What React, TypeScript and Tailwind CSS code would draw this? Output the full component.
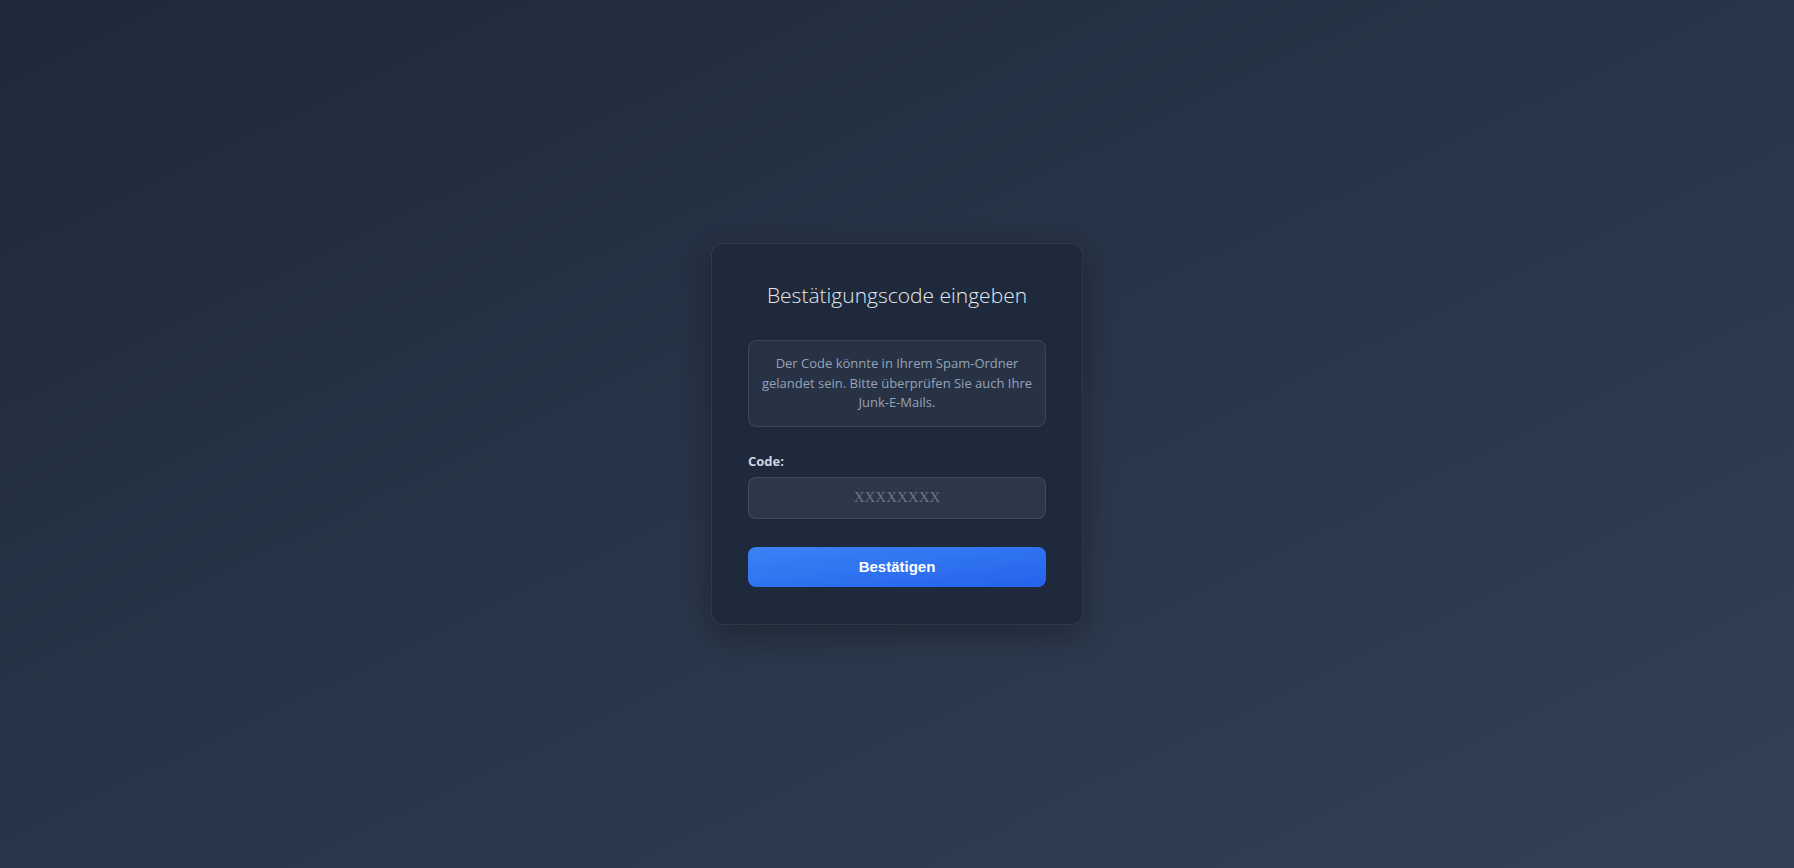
import React, { useState } from 'react';

export default function App() {
    const [code, setCode] = useState('');

    return (
        <div className="min-h-screen w-full flex items-center justify-center bg-gradient-to-br from-[#1e293b] to-[#334155] font-['Open_Sans',sans-serif]">
            {/* Verification card */}
            <div className="w-[372px] rounded-xl border border-[#334155]/70 bg-[#1e293b] px-[36px] pt-[36px] pb-[37px] shadow-[0_10px_30px_rgba(0,0,0,0.3)]">
                <h2 className="text-center text-[21px] leading-[30px] font-light text-[#e2e8f0] font-['Open_Sans',sans-serif]">
                    Bestätigungscode eingeben
                </h2>

                <div className="mt-[30px] rounded-lg border border-[#3b4658] bg-[#273244] px-[12px] py-[13px] text-center text-[13px] leading-[19.5px] text-[#94a3b8]">
                    Der Code könnte in Ihrem Spam-Ordner gelandet sein. Bitte überprüfen Sie auch Ihre Junk-E-Mails.
                </div>

                <form onSubmit={(e) => e.preventDefault()}>
                    <label htmlFor="code" className="mt-[25px] block text-[13px] leading-[18px] font-bold text-[#cbd5e1]">
                        Code:
                    </label>
                    <input
                        id="code"
                        value={code}
                        onChange={(e) => setCode(e.target.value)}
                        placeholder="XXXXXXXX"
                        className="mt-[7px] block h-[42px] w-full rounded-lg border border-[#475569]/70 bg-[#2d3748] text-center text-[15px] text-[#e2e8f0] font-['Liberation_Serif',serif] placeholder:text-[#64748b] outline-none"
                    />
                    <button
                        type="submit"
                        className="mt-[28px] block h-[40px] w-full rounded-lg bg-gradient-to-br from-[#3b82f6] to-[#2563eb] text-[15px] font-bold text-white font-['Liberation_Sans',Arial,sans-serif]"
                    >
                        Bestätigen
                    </button>
                </form>
            </div>
        </div>
    );
}
